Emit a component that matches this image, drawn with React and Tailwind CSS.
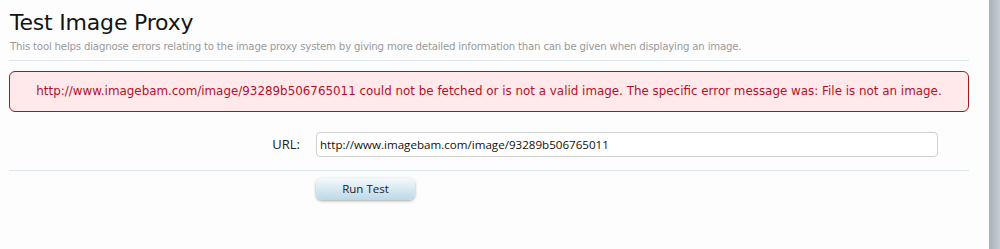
export default function App() {
  return (
    <div className="relative w-[1000px] h-[249px] bg-[#fdfdfe] overflow-hidden flex" style={{ fontFamily: '"DejaVu Sans", sans-serif' }}>
      <div className="w-[989px] pl-[9px] pr-[20px]">
        <h1 className="text-[22px] leading-[26px] text-[#141414] pt-[10px] pl-[1px] tracking-[-0.2px]">Test Image Proxy</h1>
        <p className="text-[10.2px] leading-[13px] text-[#9a9a9a] mt-[4px] pl-[1px] tracking-[-0.2px]">
          This tool helps diagnose errors relating to the image proxy system by giving more detailed information than can be given when displaying an image.
        </p>
        <div className="h-px bg-[#dde8ee] mt-[7px]" />
        <div className="mt-[10px] h-[41px] rounded-[6px] border border-[#a31a1a] bg-[#ffe9ea] flex items-center justify-center text-[11.9px] text-[#b3102a]">
          http://www.imagebam.com/image/93289b506765011 could not be fetched or is not a valid image. The specific error message was: File is not an image.
        </div>
        <div className="flex items-center mt-[20px] h-[25px]" style={{ fontFamily: '"Open Sans", sans-serif' }}>
          <div className="w-[307px] text-right pr-[16px] text-[13px] text-[#222]">URL:</div>
          <div className="w-[622px] h-[25px] border border-[#cfcfcf] rounded-[4px] bg-white flex items-center px-[3px] text-[11.6px] text-[#111]">
            http://www.imagebam.com/image/93289b506765011
          </div>
        </div>
        <div className="h-px bg-[#dde8ee] mt-[13px]" />
        <div className="pl-[307px] mt-[5px]">
          <button className="w-[99px] h-[22px] rounded-[6px] text-[11.5px] text-[#222] bg-gradient-to-b from-[#f4f9fc] to-[#bcd8e8] shadow-[0_1px_3px_rgba(0,0,0,0.35)]" style={{ fontFamily: '"Open Sans", sans-serif' }}>
            Run Test
          </button>
        </div>
      </div>
      <div className="w-[11px] h-full bg-gradient-to-r from-[#a9b2b7] to-[#c4ccd0]" />
    </div>
  );
}
